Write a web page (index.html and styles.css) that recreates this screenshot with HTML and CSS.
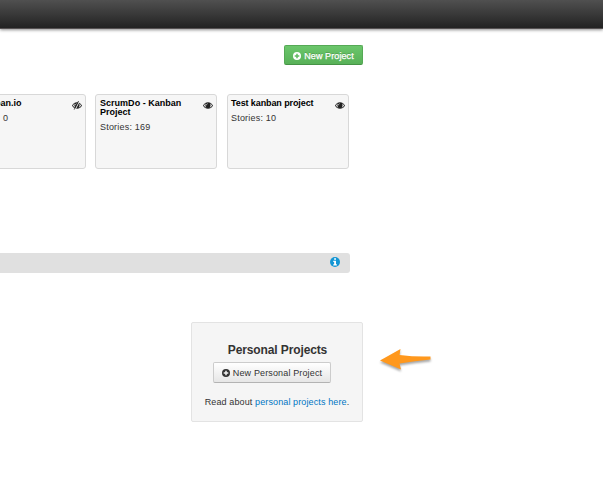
FILE: index.html
```html
<!DOCTYPE html>
<html lang="en">
<head>
<meta charset="utf-8">
<title>Projects</title>
<link rel="stylesheet" href="styles.css">
</head>
<body>
<svg class="sprite" aria-hidden="true">
  <symbol id="plus" viewBox="0 0 16 16"><path fill-rule="evenodd" d="M8 0a8 8 0 1 0 0 16A8 8 0 0 0 8 0zM6.500 3.400h3v3.100h3.100v3H9.500v3.100h-3V9.500H3.400v-3h3.100z"/></symbol>
  <symbol id="eye" viewBox="0 0 18 14"><path fill-rule="evenodd" d="M0 7C4-1 14-1 18 7 14 15 4 15 0 7zM1.700 7c1.200 2 2.700 3.400 4.500 4C3.900 9 3.700 5.300 5.600 3 4 3.800 2.700 5.200 1.700 7zM16.300 7c-1-1.800-2.300-3.200-3.900-4 1.900 2.300 1.700 6-.6 8 1.800-.6 3.300-2 4.500-4zM9 3.200c-2 0-3.200 1.300-3.200 3.200h1.100c0-1.300.8-2.100 2.100-2.100z"/></symbol>
</svg>
<header class="topbar"></header>
<main class="page">
  <div class="actions">
    <a class="btn btn-success"><svg class="plus"><use href="#plus"/></svg><span>New Project</span></a>
  </div>
  <section class="cards">
    <article class="card card-first">
      <div class="info"><h4>ban.io</h4><p>0</p></div>
      <svg class="eye"><use href="#eye"/><path d="M3 9L7.500 0" stroke="#f6f6f6" stroke-width="1"/><path d="M2.200 8.600L6.600 0" stroke="#222" stroke-width=".8"/></svg>
    </article>
    <article class="card">
      <div class="info"><h4><span class="t1">ScrumDo - Kanban</span><br>Project</h4><p>Stories: 169</p></div>
      <svg class="eye"><use href="#eye"/></svg>
    </article>
    <article class="card card-last">
      <div class="info"><h4 class="t2">Test kanban project</h4><p>Stories: 10</p></div>
      <svg class="eye"><use href="#eye"/></svg>
    </article>
  </section>
  <div class="section-bar">
    <svg class="info-icon" viewBox="0 0 16 16"><circle cx="8" cy="8" r="8" fill="#1496d4"/><path fill="#fff" d="M6.600 2h3v2.500h-3zM5.200 6h4.400v5.500H11v2H5.200v-2h1.400V8H5.200z"/></svg>
  </div>
  <section class="personal-row">
    <div class="well">
      <h3>Personal Projects</h3>
      <a class="btn btn-default"><svg class="plus"><use href="#plus"/></svg><span>New Personal Project</span></a>
      <p>Read about <a class="link">personal projects here</a>.</p>
    </div>
    <svg class="arrow" viewBox="0 0 56 30"><path d="M1 13.500L21.500 2 20.500 8Q36 10 51.500 9.500v3Q36 14 20.500 16.500L22 22.500z" fill="#ff981d"/></svg>
  </section>
</main>
</body>
</html>
```
FILE: styles.css
```css
* { box-sizing: border-box; }
body {
  margin: 0;
  height: 487px;
  overflow: hidden;
  background: #fff;
  color: #333;
  font: 9px/12px "Liberation Sans", Arial, sans-serif;
}
h3, h4, p { margin: 0; }
.sprite { display: none; }
.topbar {
  height: 29px;
  background: linear-gradient(#505050, #222);
  border-bottom: 1px solid #555152;
  box-shadow: 0 1px 3px rgba(0, 0, 0, .45);
}
.page { width: 603px; }
.actions { display: flex; padding: 16px 0 0 284px; }
.btn {
  display: flex;
  align-items: center;
  justify-content: center;
  border-radius: 2px;
  white-space: nowrap;
}
.btn span { white-space: nowrap; }
.plus { width: 8px; height: 8px; fill: currentColor; flex: none; }
.btn-success {
  width: 79px;
  height: 20px;
  gap: 3px;
  padding-top: 1px;
  color: #fff;
  background: linear-gradient(#6bc66b, #58b158);
  border: 1px solid #55a955;
  border-bottom-color: #459345;
  text-shadow: 0 -1px 0 rgba(0, 0, 0, .2);
  -webkit-text-stroke: .25px #fff;
  letter-spacing: .1px;
}
.cards { display: flex; margin: 29px 0 0 -36px; }
.card {
  display: flex;
  justify-content: space-between;
  width: 122px;
  height: 75px;
  margin-right: 10px;
  padding: 4px 3px 0 4px;
  background: #f6f6f6;
  border: 1px solid #d8d8d8;
  border-radius: 3px;
}
.card-first { margin-right: 9px; padding-left: 35px; }
.card-last { padding-left: 3px; }
.card h4 { font-size: 9px; line-height: 9px; color: #000; white-space: nowrap; }
.card p { margin-top: 4px; line-height: 12px; letter-spacing: .2px; }
.card-first h4 { margin-left: -5px; }
.card-first p { padding-left: 3px; }
.t1 { letter-spacing: .02px; }
.t2 { letter-spacing: -.1px; }
.eye { width: 10px; height: 9px; margin-top: 2px; fill: #222; flex: none; }
.section-bar {
  display: flex;
  justify-content: flex-end;
  width: 350px;
  height: 20px;
  margin-top: 84px;
  padding: 4px 10px 0 0;
  background: #e0e0e0;
  border-radius: 0 3px 3px 0;
}
.info-icon { width: 10px; height: 10px; }
.personal-row { display: flex; margin: 49px 0 0 191px; }
.well {
  display: flex;
  flex-direction: column;
  align-items: center;
  width: 172px;
  height: 100px;
  padding-top: 19px;
  background: #f5f5f5;
  border: 1px solid #e3e3e3;
  border-radius: 2px;
}
.well h3 { padding-left: 1px; font-size: 12px; line-height: 16px; letter-spacing: -.12px; white-space: nowrap; }
.btn-default {
  width: 118px;
  height: 21px;
  gap: 3px;
  margin: 4px 10px 0 0;
  background: linear-gradient(#fff, #e6e6e6);
  border: 1px solid #ccc;
  border-bottom-color: #b3b3b3;
  letter-spacing: .14px;
}
.well p { margin-top: 13px; white-space: nowrap; letter-spacing: .12px; }
.link { color: #0075c4; }
.arrow {
  width: 56px;
  height: 30px;
  margin: 25px 0 0 16px;
  filter: drop-shadow(0 2px 1px rgba(0, 0, 0, .35));
}
```
